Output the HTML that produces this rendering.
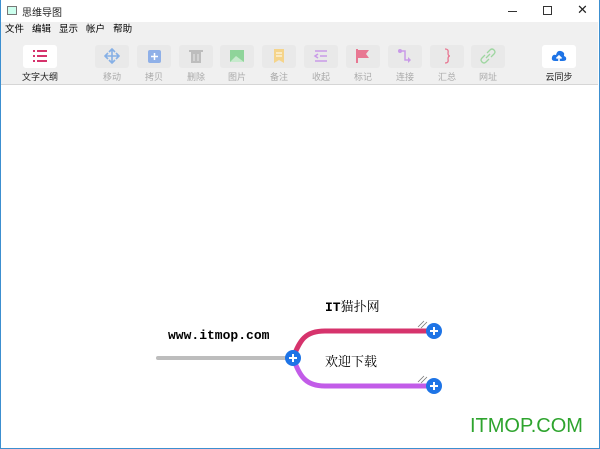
<!DOCTYPE html><html><head><meta charset="utf-8"><style>
*{margin:0;padding:0;box-sizing:border-box}
body{width:600px;height:449px;overflow:hidden;background:#fff;font-family:"Liberation Sans","Noto Sans CJK SC",sans-serif;position:relative}
.frame{position:absolute;left:0;top:0;width:600px;height:449px;border:1px solid #3c8fd0;border-top:none}
.title{position:absolute;top:0;left:0;width:600px;height:22px;font-size:10px;color:#222}
.menu{position:absolute;top:22px;left:1px;width:597px;height:16px;background:#f0f0f0;font-size:9.5px;line-height:16px}
.menu span{margin-left:4px;margin-right:4px}
.tb{position:absolute;top:38px;left:1px;width:597px;height:47px;background:#f0f0f0;border-bottom:1px solid #d6d6d6}
.b{position:absolute;top:7px;width:34px;height:23px;background:#e9e9e9;border-radius:3px}
.b.w{background:#fff}
.l{position:absolute;top:32px;width:40px;text-align:center;font-size:9px;color:#aaa}
.l.d{color:#222}
.b svg{position:absolute;left:9px;top:3px}
</style></head><body>
<div class="title">
<div style="position:absolute;left:7px;top:6px;width:10px;height:9px;border:1px solid #777;background:#cfe"></div>
<div style="position:absolute;left:22px;top:4px">思维导图</div>
<div style="position:absolute;left:508px;top:11px;width:9px;height:1px;background:#333"></div>
<div style="position:absolute;left:543px;top:6px;width:9px;height:9px;border:1px solid #333"></div>
<div style="position:absolute;left:577px;top:2px;font-size:13px">✕</div>
</div>
<div class="menu"><span>文件</span><span>编辑</span><span>显示</span><span>帐户</span><span>帮助</span></div>
<div class="tb">
<div class="b w" style="left:22px"><svg width="16" height="16"><g fill="#d6336c"><rect x="1" y="2" width="2" height="2"/><rect x="5" y="2" width="10" height="2"/><rect x="1" y="7" width="2" height="2"/><rect x="5" y="7" width="10" height="2"/><rect x="1" y="12" width="2" height="2"/><rect x="5" y="12" width="10" height="2"/></g></svg></div>
<div class="l d" style="left:19px">文字大纲</div>
<div class="b" style="left:94px"><svg width="16" height="16"><path d="M8 1V15M1 8H15M5 4L8 1L11 4M5 12L8 15L11 12M4 5L1 8L4 11M12 5L15 8L12 11" stroke="#86b0e6" stroke-width="1.6" fill="none"/></svg></div><div class="l" style="left:91px">移动</div>
<div class="b" style="left:136px"><svg width="16" height="16"><rect x="2" y="2" width="13" height="13" rx="2" fill="#8fb0e8"/><path d="M8.5 5V12M5 8.5H12" stroke="#fff" stroke-width="1.5"/></svg></div><div class="l" style="left:133px">拷贝</div>
<div class="b" style="left:178px"><svg width="16" height="16"><rect x="3" y="4" width="10" height="11" fill="#bdbdbd"/><rect x="1" y="2" width="14" height="2" fill="#bdbdbd"/><path d="M6 6V13M10 6V13" stroke="#e9e9e9"/></svg></div><div class="l" style="left:175px">删除</div>
<div class="b" style="left:219px"><svg width="16" height="16"><rect x="1" y="2" width="14" height="12" fill="#8fd49a"/><path d="M1 14L7 8L15 14Z" fill="#fff" opacity=".5"/></svg></div><div class="l" style="left:216px">图片</div>
<div class="b" style="left:261px"><svg width="16" height="16"><path d="M3 1H13V15L8 12L3 15Z" fill="#f5d48a"/><path d="M5 5H11M5 8H11" stroke="#fff"/></svg></div><div class="l" style="left:258px">备注</div>
<div class="b" style="left:303px"><svg width="16" height="16"><path d="M2 3H14M7 8H14M2 13H14M5 6L2 8L5 10" stroke="#c99ae8" stroke-width="1.5" fill="none"/></svg></div><div class="l" style="left:300px">收起</div>
<div class="b" style="left:345px"><svg width="16" height="16"><path d="M2 1V15" stroke="#e87792" stroke-width="2"/><path d="M3 2H14L11 6L14 10H3Z" fill="#e87792"/></svg></div><div class="l" style="left:342px">标记</div>
<div class="b" style="left:387px"><svg width="16" height="16"><circle cx="3" cy="3" r="2" fill="#c99ae8"/><path d="M3 3H8V12H13" stroke="#c99ae8" stroke-width="1.5" fill="none"/><path d="M11 9L14 12L11 15" fill="#c99ae8"/></svg></div><div class="l" style="left:384px">连接</div>
<div class="b" style="left:429px"><svg width="16" height="16"><path d="M6 1Q10 1 9 5Q9 8 11 8Q9 8 9 11Q10 15 6 15" stroke="#e87792" stroke-width="1.3" fill="none"/></svg></div><div class="l" style="left:426px">汇总</div>
<div class="b" style="left:470px"><svg width="16" height="16"><path d="M7 5L10 2Q12 0 14 2Q16 4 14 6L11 9M9 11L6 14Q4 16 2 14Q0 12 2 10L5 7M6 10L10 6" stroke="#9ed6a0" stroke-width="1.3" fill="none"/></svg></div><div class="l" style="left:467px">网址</div>
<div class="b w" style="left:541px"><svg width="16" height="16"><path d="M4 13Q0 13 1 9Q2 6 5 7Q6 2 10 3Q14 4 13 8Q16 9 15 12Q14 13 12 13Z" fill="#1e74e6"/><path d="M8 13V8M5.5 10.5L8 8L10.5 10.5" stroke="#fff" stroke-width="1.6" fill="none"/></svg></div><div class="l d" style="left:538px">云同步</div>
</div>
<svg style="position:absolute;left:0;top:0" width="600" height="449">
<path d="M158 358H293" stroke="#bdbdbd" stroke-width="4" stroke-linecap="round"/>
<path d="M293 358C300 340 305 331 325 331H434" stroke="#d6336c" stroke-width="5" fill="none"/>
<path d="M293 358C300 376 305 386 325 386H434" stroke="#c25ce8" stroke-width="5" fill="none"/>
<path d="M418 327L424 321M421 328L427 322" stroke="#777" stroke-width="0.8"/>
<path d="M418 382L424 376M421 383L427 377" stroke="#777" stroke-width="0.8"/>
<g fill="#1e74e6"><circle cx="293" cy="358" r="8"/><circle cx="434" cy="331" r="8"/><circle cx="434" cy="386" r="8"/></g>
<g stroke="#fff" stroke-width="2"><path d="M289 358H297M293 354V362"/><path d="M430 331H438M434 327V335"/><path d="M430 386H438M434 382V390"/></g>
<text x="168" y="339" font-family="Liberation Mono,monospace" font-weight="bold" font-size="13">www.itmop.com</text>
<text x="325" y="311" font-family="Liberation Mono,Noto Serif CJK SC,serif" font-weight="bold" font-size="13">IT<tspan font-weight="normal" font-family="Noto Serif CJK SC,serif">猫扑网</tspan></text>
<text x="325" y="366" font-family="Noto Serif CJK SC,serif" font-size="13">欢迎下载</text>
<text x="470" y="432" font-family="Liberation Sans,sans-serif" font-size="20" fill="#2ea42e">ITMOP.COM</text>
</svg>
<div class="frame"></div>
</body></html>
